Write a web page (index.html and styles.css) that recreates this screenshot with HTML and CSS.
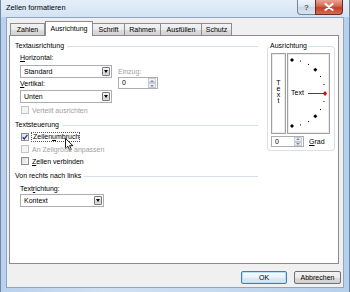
FILE: index.html
```html
<!DOCTYPE html>
<html lang="de">
<head>
<meta charset="utf-8">
<title>Zellen formatieren</title>
<link rel="stylesheet" href="styles.css">
</head>
<body>
<div class="window">
  <div class="titlebar">
    <span class="title">Zellen formatieren</span>
    <div class="capbtns">
      <div class="capbtn help">?</div>
      <div class="capbtn close">
        <svg width="10" height="8" viewBox="0 0 10 8"><path d="M1.5 1 L8.5 7 M8.5 1 L1.5 7" stroke="#fff" stroke-width="2" stroke-linecap="round"/></svg>
      </div>
    </div>
  </div>
  <div class="client">
    <div class="tabs">
      <div class="tab t-zahlen">Zahlen</div>
      <div class="tab active">Ausrichtung</div>
      <div class="tab t-schrift">Schrift</div>
      <div class="tab t-rahmen">Rahmen</div>
      <div class="tab t-fuellen">Ausfüllen</div>
      <div class="tab t-schutz">Schutz</div>
    </div>
    <div class="panel">
      <div class="left">
        <div class="header">Textausrichtung</div>
        <div class="halign">
          <div class="hcol">
            <div class="label"><u>H</u>orizontal:</div>
            <div class="combo"><span>Standard</span><span class="drop"></span></div>
            <div class="label l-vert"><u>V</u>ertikal:</div>
            <div class="combo c-unten"><span>Unten</span><span class="drop"></span></div>
          </div>
          <div class="icol">
            <div class="label disabled">Einzug:</div>
            <div class="spin s-einzug"><span>0</span><span class="arrows"><span class="up"></span><span class="dn"></span></span></div>
          </div>
        </div>
        <div class="check disabled c-first"><span class="box"></span><span>Verteilt ausrichten</span></div>

        <div class="header h-mid">Textsteuerung</div>
        <div class="check c-first c-focus">
          <span class="box checked"><svg width="6" height="6" viewBox="0 0 6 6"><path d="M0.6 3.2 L2.3 5 L5.4 0.8" fill="none" stroke="#1f3c8f" stroke-width="1.3"/></svg></span>
          <span class="focus">Zeilen<u>u</u>mbruch</span>
          <svg class="cursor" width="9" height="13" viewBox="0 0 9 13"><path d="M0.5 0.5 L0.5 10.5 L2.9 8.3 L4.6 12.2 L6.3 11.5 L4.6 7.7 L7.9 7.7 Z" fill="#fff" stroke="#000" stroke-width="0.9" stroke-linejoin="round"/></svg>
        </div>
        <div class="check disabled"><span class="box"></span><span>An Zellgröße anpassen</span></div>
        <div class="check"><span class="box"></span><span><u>Z</u>ellen verbinden</span></div>

        <div class="header h-mid">Von rechts nach links</div>
        <div class="indent">
          <div class="label l-dir">Text<u>r</u>ichtung:</div>
          <div class="combo c-kontext"><span>Kontext</span><span class="drop"></span></div>
        </div>
      </div>

      <div class="right">
        <div class="group">
          <span class="group-title">Ausrichtung</span>
          <div class="orient-row">
            <div class="vtext"><span>T</span><span>e</span><span>x</span><span>t</span></div>
            <div class="dial">
              <svg width="41" height="79" viewBox="0 0 41 79">
                <g fill="#000">
                  <polygon points="4,4 6,6 4,8 2,6"/>
                  <polygon points="27.3,13.7 29.3,15.7 27.3,17.7 25.3,15.7"/>
                  <polygon points="27.3,60.3 29.3,62.3 27.3,64.3 25.3,62.3"/>
                  <polygon points="4,70 6,72 4,74 2,72"/>
                  <rect x="12" y="6.6" width="1" height="1"/>
                  <rect x="20" y="9.9" width="1" height="1"/>
                  <rect x="32" y="22" width="1" height="1"/>
                  <rect x="35.4" y="30" width="1" height="1"/>
                  <rect x="35.4" y="47" width="1" height="1"/>
                  <rect x="32" y="55" width="1" height="1"/>
                  <rect x="20" y="67.1" width="1" height="1"/>
                  <rect x="12" y="70.4" width="1" height="1"/>
                </g>
                <line x1="20" y1="39.5" x2="36" y2="39.5" stroke="#444" stroke-width="1"/>
                <polygon points="37,37 39,39.5 37,42 35,39.5" fill="#e00000"/>
              </svg>
              <span class="dial-text">Text</span>
            </div>
          </div>
          <div class="grad-row">
            <div class="spin s-grad"><span>0</span><span class="arrows"><span class="up"></span><span class="dn"></span></span></div>
            <span class="label"><u>G</u>rad</span>
          </div>
        </div>
      </div>
    </div>
    <div class="footer">
      <button class="btn default">OK</button>
      <button class="btn">Abbrechen</button>
    </div>
  </div>
</div>
</body>
</html>
```

FILE: styles.css
```css
* { box-sizing: border-box; }

html, body {
  margin: 0;
  padding: 0;
}

body {
  width: 350px;
  height: 292px;
  overflow: hidden;
  font-family: "Liberation Sans", Arial, sans-serif;
  font-size: 7px;
  color: #000;
}

.window {
  height: 292px;
  display: flex;
  flex-direction: column;
  padding: 0 5px 4px 5px;
  border-left: 1px solid #6f88a6;
  border-right: 1px solid #6f88a6;
  background: linear-gradient(90deg, #b9d1ec 0%, #cfe0f3 30%, #c3d8ef 70%, #b6cfeb 100%);
}

.titlebar {
  height: 17px;
  display: flex;
  justify-content: space-between;
  align-items: flex-start;
  background: linear-gradient(#e4eef9, #d3e3f4);
  margin: 0 -5px;
  padding: 0 5px;
}

.title {
  font-size: 7.4px;
  line-height: 15px;
  color: #000;
}

.capbtns {
  display: flex;
  margin-right: 1px;
}

.capbtn {
  height: 15px;
  display: flex;
  align-items: center;
  justify-content: center;
}

.help {
  width: 18px;
  border: 1px solid #73869e;
  border-top: none;
  border-right: none;
  border-radius: 0 0 0 4px;
  background: linear-gradient(#f1f5fa, #dbe4ee 50%, #cbd7e4 51%, #d9e3ee);
  color: #4a5a70;
  font-size: 8px;
  font-weight: bold;
}

.close {
  width: 28px;
  border: 1px solid #6b2b22;
  border-top: none;
  border-radius: 0 0 4px 0;
  background: linear-gradient(#e9a594, #d1664f 45%, #c0402a 55%, #d66c52);
}

.client {
  flex: 1;
  display: flex;
  flex-direction: column;
  background: #f0f0f0;
  border: 1px solid #90a5bf;
  padding: 3px 4px 3px 2px;
}

.tabs {
  display: flex;
  align-items: flex-end;
  height: 14px;
  padding-left: 1px;
  position: relative;
  z-index: 2;
}

.tab {
  height: 12px;
  border: 1px solid #898c95;
  border-bottom: none;
  margin-right: -1px;
  text-align: center;
  line-height: 11px;
  background: linear-gradient(#f3f3f3, #ebebeb 50%, #dddddd 51%, #d3d3d3);
  white-space: nowrap;
}

.t-zahlen { width: 35px; margin-right: 0; }
.t-schrift { width: 33px; }
.t-rahmen { width: 37px; }
.t-fuellen { width: 42px; }
.t-schutz { width: 31px; }

.tab.active {
  width: 48px;
  height: 15px;
  margin-bottom: -1px;
  background: #fff;
  line-height: 13px;
}

.panel {
  flex: 1;
  display: flex;
  gap: 9px;
  background: #fff;
  border: 1px solid #898c95;
  padding: 5px 3px 0 5px;
  position: relative;
  z-index: 1;
}

.left {
  flex: 1;
  display: flex;
  flex-direction: column;
}

.header {
  display: flex;
  align-items: center;
  gap: 3px;
  height: 10px;
  line-height: 10px;
}

.header::after {
  content: "";
  flex: 1;
  height: 1px;
  background: #d5dfe5;
}

.h-mid { margin-top: 5px; }

.label {
  height: 10px;
  line-height: 10px;
  white-space: nowrap;
}

.disabled { color: #a0a0a0; }

.halign {
  display: flex;
  gap: 6px;
  padding-left: 5px;
  margin-top: 2px;
}

.hcol {
  width: 92px;
  display: flex;
  flex-direction: column;
}

.combo {
  height: 13px;
  border: 1px solid #abadb3;
  background: #fff;
  display: flex;
  align-items: center;
  justify-content: space-between;
  padding-left: 3px;
  margin-top: 2px;
}

.l-vert { margin-top: 1px; }
.c-unten { margin-top: 1px; }

.drop {
  width: 8px;
  height: 9px;
  margin-right: 1px;
  border: 1px solid #7a7a7a;
  border-radius: 1px;
  background: linear-gradient(#f4f4f4, #e2e2e2 50%, #d2d2d2 51%, #dcdcdc);
  display: flex;
  align-items: center;
  justify-content: center;
}

.drop::after {
  content: "";
  border-left: 2.5px solid transparent;
  border-right: 2.5px solid transparent;
  border-top: 3px solid #000;
}

.icol {
  display: flex;
  flex-direction: column;
  padding-top: 14px;
}

.spin {
  height: 12px;
  border: 1px solid #abadb3;
  background: #fff;
  display: flex;
  align-items: stretch;
  justify-content: space-between;
  padding-left: 3px;
  line-height: 10px;
}

.s-einzug { width: 40px; }

.arrows {
  width: 9px;
  display: flex;
  flex-direction: column;
  padding: 0 1px 0 0;
}

.arrows .up, .arrows .dn {
  flex: 1;
  border: 1px solid #c8ccd2;
  background: linear-gradient(#f6f7f9, #e3e7ec);
  display: flex;
  align-items: center;
  justify-content: center;
}

.arrows .up::after {
  content: "";
  border-left: 2px solid transparent;
  border-right: 2px solid transparent;
  border-bottom: 2px solid #7d8ea6;
}

.arrows .dn::after {
  content: "";
  border-left: 2px solid transparent;
  border-right: 2px solid transparent;
  border-top: 2px solid #7d8ea6;
}

.check {
  position: relative;
  display: flex;
  align-items: center;
  height: 10px;
  margin-top: 2px;
  padding-left: 6px;
  white-space: nowrap;
}

.c-first { margin-top: 2px; }

.box {
  width: 8px;
  height: 8px;
  border: 1px solid #8e8f8f;
  background: linear-gradient(135deg, #dcdcdc, #fbfbfb);
  margin-right: 2px;
  display: flex;
  align-items: center;
  justify-content: center;
}

.check.disabled .box {
  border-color: #c4c4c4;
  background: #f4f4f4;
}

.check > span:nth-child(2) { padding-left: 1px; }

.focus {
  border: 1px dotted #555;
  padding: 0 0 0 1px;
  height: 10px;
  line-height: 8px;
}

.cursor {
  position: absolute;
  left: 50px;
  top: 6px;
}

.indent {
  padding-left: 5px;
  display: flex;
  flex-direction: column;
}

.l-dir { margin-top: 3px; }

.c-kontext {
  width: 84px;
  margin-top: 0;
}

.right {
  width: 68px;
  display: flex;
  flex-direction: column;
}

.group {
  position: relative;
  margin-top: 5px;
  height: 105px;
  border: 1px solid #d5dfe5;
  border-radius: 3px;
  padding: 6px 3px 3px 3px;
  display: flex;
  flex-direction: column;
}

.group-title {
  position: absolute;
  top: -6px;
  left: 1px;
  padding: 0 1px;
  background: #fff;
  line-height: 10px;
}

.orient-row {
  display: flex;
  gap: 1px;
  height: 81px;
}

.vtext {
  width: 15px;
  border: 1px solid #a0a0a0;
  box-shadow: inset 0 0 0 1px #ececec;
  display: flex;
  flex-direction: column;
  align-items: center;
  justify-content: center;
  line-height: 6px;
  padding-bottom: 4px;
}

.dial {
  position: relative;
  width: 43px;
  border: 1px solid #a0a0a0;
  box-shadow: inset 0 0 0 1px #ececec;
}

.dial svg { display: block; }

.dial-text {
  position: absolute;
  left: 3px;
  top: 34px;
  line-height: 10px;
}

.grad-row {
  display: flex;
  align-items: center;
  gap: 5px;
  margin-top: 2px;
}

.s-grad {
  width: 33px;
  height: 11px;
  line-height: 9px;
}

.footer {
  display: flex;
  justify-content: flex-end;
  gap: 7px;
  margin-top: 7px;
  margin-right: -2px;
  height: 13px;
}

.btn {
  height: 13px;
  padding: 0;
  margin: 0;
  font-family: "Liberation Sans", Arial, sans-serif;
  font-size: 7px;
  line-height: 11px;
  color: #000;
  border: 1px solid #707070;
  border-radius: 2px;
  background: linear-gradient(#f2f2f2, #ebebeb 50%, #dddddd 51%, #cfcfcf);
  width: 47px;
}

.btn.default {
  width: 46px;
  border-color: #3c7fb1;
  box-shadow: inset 0 0 0 1px #b4e2f9;
  background: linear-gradient(#f6fafd, #eaf3f9 50%, #dde9f2 51%, #d4e3ef);
}
```
